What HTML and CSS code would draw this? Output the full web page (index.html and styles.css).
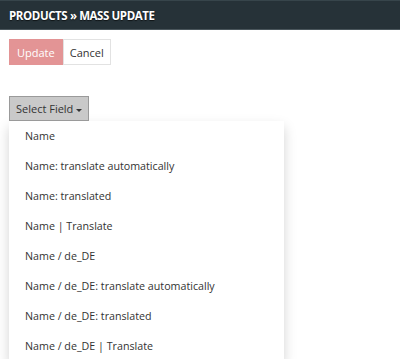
FILE: index.html
```html
<!DOCTYPE html>
<html lang="en">
<head>
    <meta charset="UTF-8">
    <title>Products - Mass Update</title>
    <link rel="stylesheet" href="styles.css">
</head>
<body>

    <div class="page-header">
        <h1>Products &raquo; Mass Update</h1>
    </div>

    <div class="content">
        <div class="actions">
            <button class="btn btn-update">Update</button>
            <button class="btn btn-cancel">Cancel</button>
        </div>

        <div class="dropdown">
            <button class="btn btn-select">Select Field <span class="caret"></span></button>
            <ul class="dropdown-menu">
                <li>Name</li>
                <li>Name: translate automatically</li>
                <li>Name: translated</li>
                <li>Name | Translate</li>
                <li>Name / de_DE</li>
                <li>Name / de_DE: translate automatically</li>
                <li>Name / de_DE: translated</li>
                <li>Name / de_DE | Translate</li>
            </ul>
        </div>
    </div>

</body>
</html>
```

FILE: styles.css
```css
body {
    font-family: 'Open Sans', sans-serif;
    font-size: 10.7px;
    color: #333;
    background-color: #fff;
    margin: 0;
    overflow: hidden;
}

.page-header {
    background-color: #263238;
    border-top: 1px solid #37454b;
    border-bottom: 1px solid #4a565c;
    height: 28px;
    display: flex;
    align-items: center;
    padding: 0 9px;
}

.page-header h1 {
    margin: 0;
    color: #fff;
    font-size: 11.5px;
    font-weight: 700;
    text-transform: uppercase;
    letter-spacing: -0.4px;
    text-shadow: 0 1px 1px rgba(0, 0, 0, 0.6);
}

.content {
    padding: 9px 9px 0;
}

.actions {
    display: flex;
}

.btn {
    font-family: 'Open Sans', sans-serif;
    font-size: 11px;
    height: 26px;
    margin: 0;
    cursor: pointer;
}

.btn-update {
    background-color: #e39495;
    border: 1px solid #e39495;
    color: #fff;
    padding: 0 7px;
}

.btn-cancel {
    background-color: #fff;
    border: 1px solid #e2e2e2;
    color: #333;
    padding: 0 6px;
}

.dropdown {
    margin-top: 31px;
}

.btn-select {
    background-color: #c9c9c9;
    border: 1px solid #9a9a9a;
    color: #333;
    height: 25px;
    padding: 0 6px;
}

.caret {
    display: inline-block;
    width: 0;
    height: 0;
    border-top: 3px solid #333;
    border-left: 3px solid transparent;
    border-right: 3px solid transparent;
    vertical-align: middle;
}

.dropdown-menu {
    list-style: none;
    margin: 0;
    padding: 0;
    width: 275px;
    background-color: #fff;
    box-shadow: 0 6px 12px rgba(0, 0, 0, 0.175);
}

.dropdown-menu li {
    height: 30px;
    line-height: 30px;
    padding: 0 16px;
    white-space: nowrap;
}
```
